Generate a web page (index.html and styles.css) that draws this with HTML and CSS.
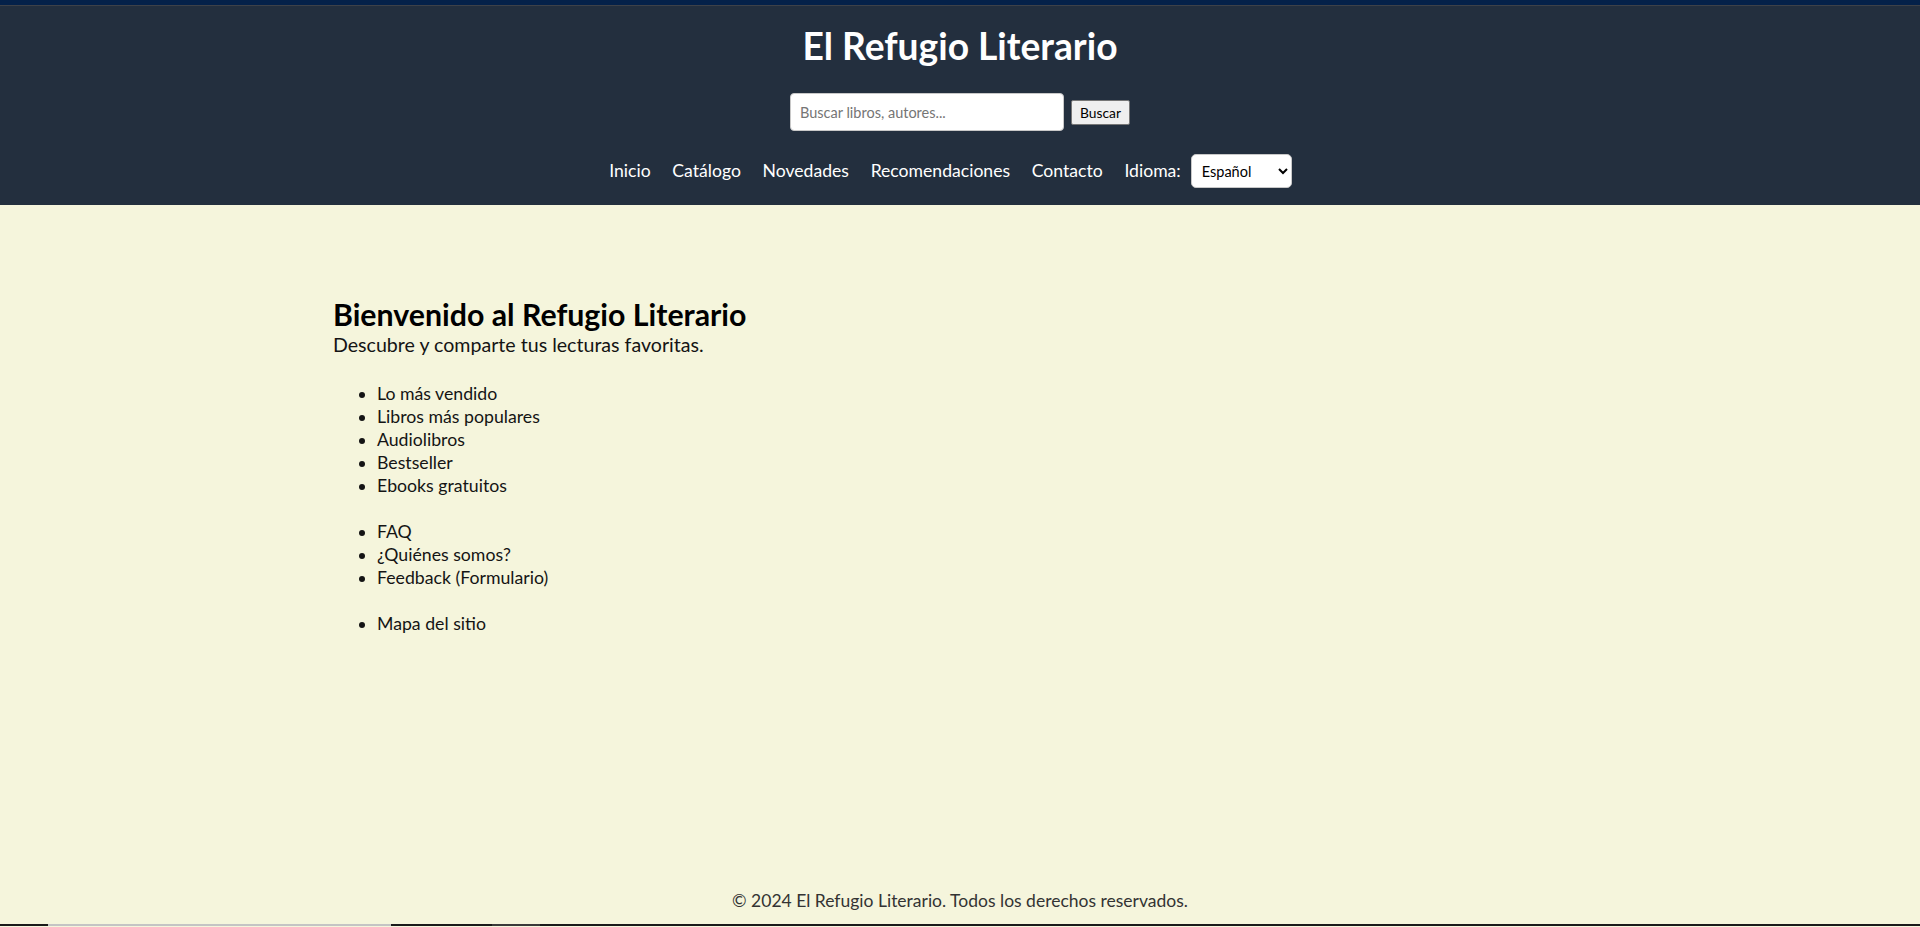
FILE: index.html
```html
<!DOCTYPE html>
<html lang="es">
<head>
<meta charset="utf-8">
<title>El Refugio Literario</title>
<link rel="stylesheet" href="styles.css">
</head>
<body>
<div class="topbar"></div>
<header class="site-header">
  <h1 class="site-title">El Refugio Literario</h1>
  <form class="search">
    <input class="search-input" type="text" placeholder="Buscar libros, autores...">
    <button class="search-btn" type="button">Buscar</button>
  </form>
  <nav class="main-nav">
    <a href="#">Inicio</a>
    <a href="#">Catálogo</a>
    <a href="#">Novedades</a>
    <a href="#">Recomendaciones</a>
    <a href="#">Contacto</a>
    <span class="lang">
      <label for="idioma">Idioma:</label>
      <select id="idioma" class="lang-select">
        <option>Español</option>
        <option>English</option>
      </select>
    </span>
  </nav>
</header>
<main class="content">
  <div class="container">
    <h2 class="welcome">Bienvenido al Refugio Literario</h2>
    <p class="intro">Descubre y comparte tus lecturas favoritas.</p>
    <ul class="links">
      <li>Lo más vendido</li>
      <li>Libros más populares</li>
      <li>Audiolibros</li>
      <li>Bestseller</li>
      <li>Ebooks gratuitos</li>
    </ul>
    <ul class="links">
      <li>FAQ</li>
      <li>¿Quiénes somos?</li>
      <li>Feedback (Formulario)</li>
    </ul>
    <ul class="links">
      <li>Mapa del sitio</li>
    </ul>
  </div>
</main>
<footer class="site-footer">© 2024 El Refugio Literario. Todos los derechos reservados.</footer>
<div class="bottom-edge"><span class="edge-seg"></span><span class="edge-seg2"></span></div>
</body>
</html>
```
FILE: styles.css
```css
html, body {
  margin: 0;
  padding: 0;
}
body {
  min-height: 100vh;
  display: flex;
  flex-direction: column;
  background: #f5f5dc;
  font-family: Lato, "Open Sans", sans-serif;
  color: #141414;
  padding-bottom: 1px;
  box-sizing: border-box;
}
.topbar {
  height: 5px;
  background: #042149;
  border-bottom: 1px solid #3d4148;
  flex: none;
}
.site-header {
  background: #232f3e;
  color: #fff;
  padding: 16px 0 17px;
  display: flex;
  flex-direction: column;
  align-items: center;
  flex: none;
}
.site-title {
  margin: 0;
  font-size: 37.2px;
  line-height: 48px;
  font-weight: 700;
  color: #fff;
}
.search {
  margin: 23px 0 0;
  display: flex;
  align-items: center;
  gap: 7px;
  height: 38px;
}
.search-input {
  box-sizing: border-box;
  width: 274px;
  height: 38px;
  padding: 0 9px;
  border: 1px solid #c8c8c8;
  border-radius: 4px;
  background: #fff;
  font-family: Lato, sans-serif;
  font-size: 14.5px;
  color: #222;
  outline: none;
}
.search-input::placeholder {
  color: #757575;
}
.search-btn {
  box-sizing: border-box;
  height: 25px;
  padding: 1px 8px;
  font-family: Lato, sans-serif;
  font-size: 13.8px;
  color: #000;
  background: #efefef;
  border: 1px solid #767676;
  border-radius: 2px;
}
.main-nav {
  margin-top: 23px;
  height: 34px;
  display: flex;
  align-items: center;
  gap: 21.7px;
  padding-right: 19px;
  font-size: 17.6px;
  line-height: 24px;
}
.main-nav a {
  color: #fff;
  text-decoration: none;
}
.lang {
  display: flex;
  align-items: center;
  gap: 10px;
}
.lang label {
  color: #fff;
}
.lang-select {
  box-sizing: border-box;
  width: 101px;
  height: 34px;
  padding: 0 6px;
  font-family: Lato, sans-serif;
  font-size: 14.5px;
  color: #000;
  background: #fff;
  border: 1px solid #c8c8c8;
  border-radius: 5px;
}
.content {
  flex: 1;
  padding-top: 91px;
}
.container {
  max-width: 1254px;
  margin: 0 auto;
}
.welcome {
  margin: 0;
  font-size: 30.3px;
  line-height: 36px;
  font-weight: 700;
  color: #000;
}
.intro {
  margin: 0 0 24px;
  font-size: 19.6px;
  line-height: 26px;
}
.links {
  margin: 0 0 23px;
  padding-left: 44px;
  font-size: 17.7px;
  line-height: 23px;
}
.site-footer {
  flex: none;
  text-align: center;
  font-size: 17.5px;
  line-height: 24px;
  color: #333;
  padding-bottom: 11px;
}
.bottom-edge {
  flex: none;
  height: 2px;
  background: #1a1a1a;
  display: flex;
}
.edge-seg {
  margin-left: 48px;
  width: 343px;
  background: #c4c4c4;
}
.edge-seg2 {
  margin-left: 101px;
  width: 48px;
  background: #3a3a3a;
}
```
